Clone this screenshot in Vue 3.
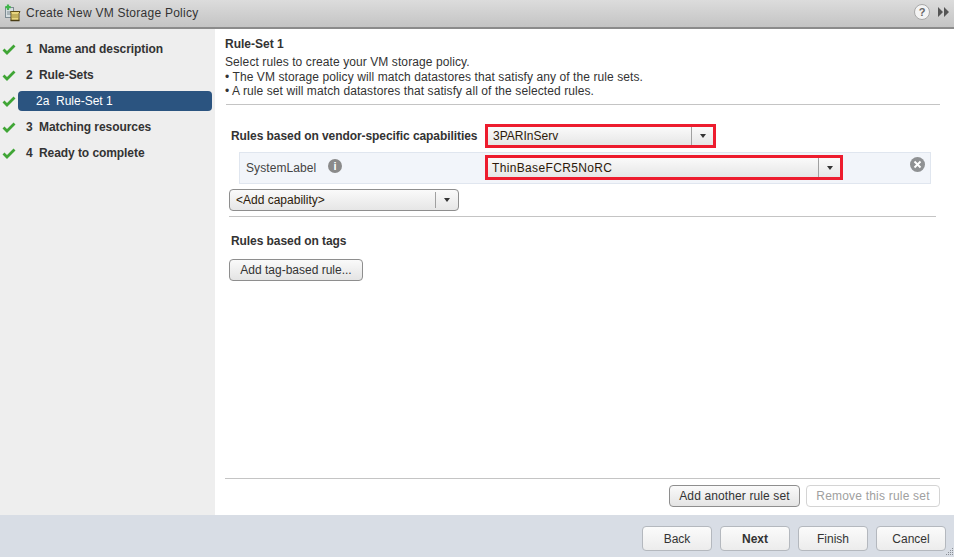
<script setup>
const steps = [
  { n: '1', label: 'Name and description' },
  { n: '2', label: 'Rule-Sets' },
  { n: '2a', label: 'Rule-Set 1', active: true },
  { n: '3', label: 'Matching resources' },
  { n: '4', label: 'Ready to complete' }
]
</script>

<template>
  <div class="dialog">
    <header class="titlebar">
      <svg class="logo" width="20" height="20" viewBox="0 0 20 20">
        <rect x="1.500" y="4.500" width="8" height="10" fill="#d5dde0" stroke="#7d8b92" />
        <path d="M3 9h5M3 11h5" stroke="#7d8b92" />
        <path d="M6.500 8.500h9.500l-1 2v7h-8v-7z" fill="#e9d67e" stroke="#5f4f1a" />
        <path d="M8 12h6M8 14h6" stroke="#9a8838" />
        <path d="M6.500 17.500h9" stroke="#4a3d14" stroke-width="1.500" />
        <path d="M4 1.500v5.500M1.300 4.200h5.400" stroke="#3fb54a" stroke-width="2.200" />
      </svg>
      <span class="title">Create New VM Storage Policy</span>
      <span class="help">?</span>
      <svg class="more" width="12" height="10" viewBox="0 0 12 10">
        <path d="M0 0l5 5-5 5zM6 0l5 5-5 5z" fill="#555" />
      </svg>
    </header>

    <div class="main">
      <nav class="sidebar">
        <div v-for="s in steps" :key="s.n" class="step">
          <svg class="check" width="14" height="11" viewBox="0 0 14 11">
            <path d="M1.500 5.500l3.500 3.500 7.500-7.500" fill="none" stroke="#3fa535" stroke-width="2.800" />
          </svg>
          <div v-if="s.active" class="pill"><span class="num-a">{{ s.n }}</span>{{ s.label }}</div>
          <div v-else class="step-text"><span class="num">{{ s.n }}</span>{{ s.label }}</div>
        </div>
      </nav>

      <section class="content">
        <h2 class="heading">Rule-Set 1</h2>
        <p class="desc">Select rules to create your VM storage policy.</p>
        <p class="desc">• The VM storage policy will match datastores that satisfy any of the rule sets.</p>
        <p class="desc">• A rule set will match datastores that satisfy all of the selected rules.</p>
        <hr class="rule first" />

        <div class="form">
          <div class="vendor-row">
            <span class="label vendor-label">Rules based on vendor-specific capabilities</span>
            <div class="red vendor-red">
              <div class="select">
                <span class="select-text">3PARInServ</span>
                <span class="arrow-box"><i class="tri"></i></span>
              </div>
            </div>
          </div>

          <div class="cap-row">
            <span class="cap-name">SystemLabel</span>
            <span class="info">i</span>
            <div class="red cap-red">
              <div class="select">
                <span class="select-text thin">ThinBaseFCR5NoRC</span>
                <span class="arrow-box"><i class="tri"></i></span>
              </div>
            </div>
            <span class="close">
              <svg width="15" height="15" viewBox="0 0 14 14">
                <circle cx="7" cy="7" r="7" fill="#8f9193" />
                <path d="M4.200 4.200l5.600 5.600M9.800 4.200l-5.600 5.600" stroke="#fff" stroke-width="1.800" />
              </svg>
            </span>
          </div>

          <div class="select add-cap">
            <span class="select-text">&lt;Add capability&gt;</span>
            <span class="arrow-box"><i class="tri"></i></span>
          </div>
          <hr class="rule second" />

          <div class="label tags">Rules based on tags</div>
          <button class="btn tag-btn">Add tag-based rule...</button>
        </div>

        <div class="actions">
          <button class="btn add-set">Add another rule set</button>
          <button class="btn remove-set" disabled>Remove this rule set</button>
        </div>
      </section>
    </div>

    <footer class="footer">
      <button class="btn foot">Back</button>
      <button class="btn foot next">Next</button>
      <button class="btn foot">Finish</button>
      <button class="btn foot">Cancel</button>
      <svg class="grip" width="10" height="10" viewBox="0 0 10 10">
        <path d="M8 1h1v1H8zM6 3h1v1H6zM8 3h1v1H8zM4 5h1v1H4zM6 5h1v1H6zM8 5h1v1H8zM2 7h1v1H2zM4 7h1v1H4zM6 7h1v1H6zM8 7h1v1H8z" fill="#8b9097" />
      </svg>
    </footer>
  </div>
</template>

<style>
html, body { margin: 0; padding: 0; background: #fff; }
</style>

<style scoped>
* { box-sizing: border-box; }
.dialog {
  width: 954px;
  height: 557px;
  display: flex;
  flex-direction: column;
  overflow: hidden;
  font-family: "Liberation Sans", Arial, sans-serif;
  font-size: 12px;
  color: #333;
  position: relative;
}
.titlebar {
  height: 29px;
  flex: none;
  display: flex;
  align-items: center;
  padding: 0 4px 2px 4px;
  background: linear-gradient(#dcdcdc, #c4c4c4);
  border-bottom: 2px solid #8b8b8b;
}
.logo { flex: none; }
.title { margin-left: 2px; flex: 1; color: #333; letter-spacing: .25px; }
.help {
  width: 16px;
  height: 16px;
  margin-top: -2px;
  border-radius: 50%;
  background: #f4f4f4;
  border: 1px solid #a8a8a8;
  font-weight: bold;
  font-size: 11px;
  line-height: 14px;
  text-align: center;
  color: #666;
}
.more { margin-left: 8px; margin-top: -2px; }
.main { flex: 1; display: flex; min-height: 0; }
.sidebar {
  width: 215px;
  flex: none;
  background: #eeeeee;
  padding-top: 7px;
}
.step {
  height: 26px;
  display: flex;
  align-items: center;
  padding-left: 2px;
}
.check { flex: none; }
.step-text { margin-left: 10px; font-weight: bold; color: #333; letter-spacing: -.07px; }
.num { display: inline-block; width: 13px; }
.pill {
  margin-left: 2px;
  width: 194px;
  height: 20px;
  border-radius: 4px;
  background: #2b5480;
  color: #fff;
  line-height: 20px;
  padding-left: 18px;
}
.num-a { display: inline-block; width: 20px; }
.content {
  flex: 1;
  display: flex;
  flex-direction: column;
  padding: 8px 14px 8px 10px;
  min-width: 0;
}
.heading { margin: 0 0 4px; font-size: 12px; font-weight: bold; line-height: 14px; color: #333; }
.desc { margin: 0; line-height: 14.500px; color: #333; letter-spacing: .09px; }
.rule { border: 0; height: 1px; margin: 0; background: #c4c4c4; }
.first { margin-top: 5px; margin-left: 1px; }
.form { flex: 1; padding: 19px 4px 0 4px; }
.vendor-row { display: flex; align-items: center; padding-left: 2px; height: 24px; }
.label { font-weight: bold; color: #333; letter-spacing: -.07px; }
.vendor-label { width: 246px; white-space: nowrap; }
.red { border: 3px solid #ed1c2e; background: #fff; }
.vendor-red { margin-left: 8px; width: 231px; height: 24px; }
.select {
  display: flex;
  align-items: center;
  height: 100%;
  background: linear-gradient(#fafafa, #e6e6e6);
  color: #2c1a0a;
}
.select-text { flex: 1; padding-left: 5px; }
.select-text.thin { padding-left: 4px; letter-spacing: .35px; }
.arrow-box {
  width: 22px;
  height: 100%;
  display: flex;
  align-items: center;
  justify-content: center;
  border-left: 1px solid #a0a0a0;
}
.tri {
  width: 0;
  height: 0;
  border-left: 3.500px solid transparent;
  border-right: 3.500px solid transparent;
  border-top: 4px solid #333;
}
.cap-row {
  display: flex;
  align-items: center;
  height: 32px;
  margin: 4px 5px 0 10px;
  padding-left: 6px;
  background: #f2f5fa;
  border: 1px solid #e0e6ef;
}
.cap-name { width: 82px; color: #444; letter-spacing: .08px; }
.info {
  width: 14px;
  height: 14px;
  border-radius: 50%;
  background: #8a8a8a;
  color: #fff;
  font-weight: bold;
  font-size: 11px;
  line-height: 14px;
  text-align: center;
  margin-top: -3px;
}
.cap-red { margin-left: 143px; width: 358px; height: 25px; }
.close { margin-left: 67px; display: flex; margin-top: -6px; }
.add-cap {
  width: 230px;
  height: 22px;
  margin-top: 5px;
  border: 1px solid #8e8e8e;
  border-radius: 4px;
}
.add-cap .select-text { padding-left: 6px; }
.add-cap .arrow-box { height: 16px; width: 23px; }
.second { margin-top: 5px; width: 707px; }
.tags { margin-top: 17px; margin-left: 2px; line-height: 14px; }
.btn {
  font-family: inherit;
  font-size: 12px;
  height: 22px;
  padding: 0;
  border: 1px solid #8e8e8e;
  border-radius: 4px;
  background: linear-gradient(#fafafa, #e4e4e4);
  color: #333;
}
.tag-btn { display: block; width: 134px; margin-top: 11px; }
.actions {
  flex: none;
  display: flex;
  justify-content: flex-end;
  gap: 6px;
  border-top: 1px solid #c4c4c4;
  padding-top: 6px;
  height: 29px;
}
.add-set { width: 131px; letter-spacing: .12px; }
.remove-set {
  width: 134px;
  background: #fff;
  border-color: #d4d4d4;
  color: #a0a0a0;
  letter-spacing: .2px;
}
.footer {
  height: 42px;
  flex: none;
  background: #d8dde5;
  display: flex;
  justify-content: flex-end;
  gap: 8px;
  padding: 11px 8px 0 0;
  position: relative;
}
.foot {
  width: 70px;
  height: 25px;
  border-color: #b4b8be;
  background: linear-gradient(#fbfbfb, #ececec);
}
.next { font-weight: bold; }
.grip { position: absolute; right: 0; bottom: 0; }
</style>
